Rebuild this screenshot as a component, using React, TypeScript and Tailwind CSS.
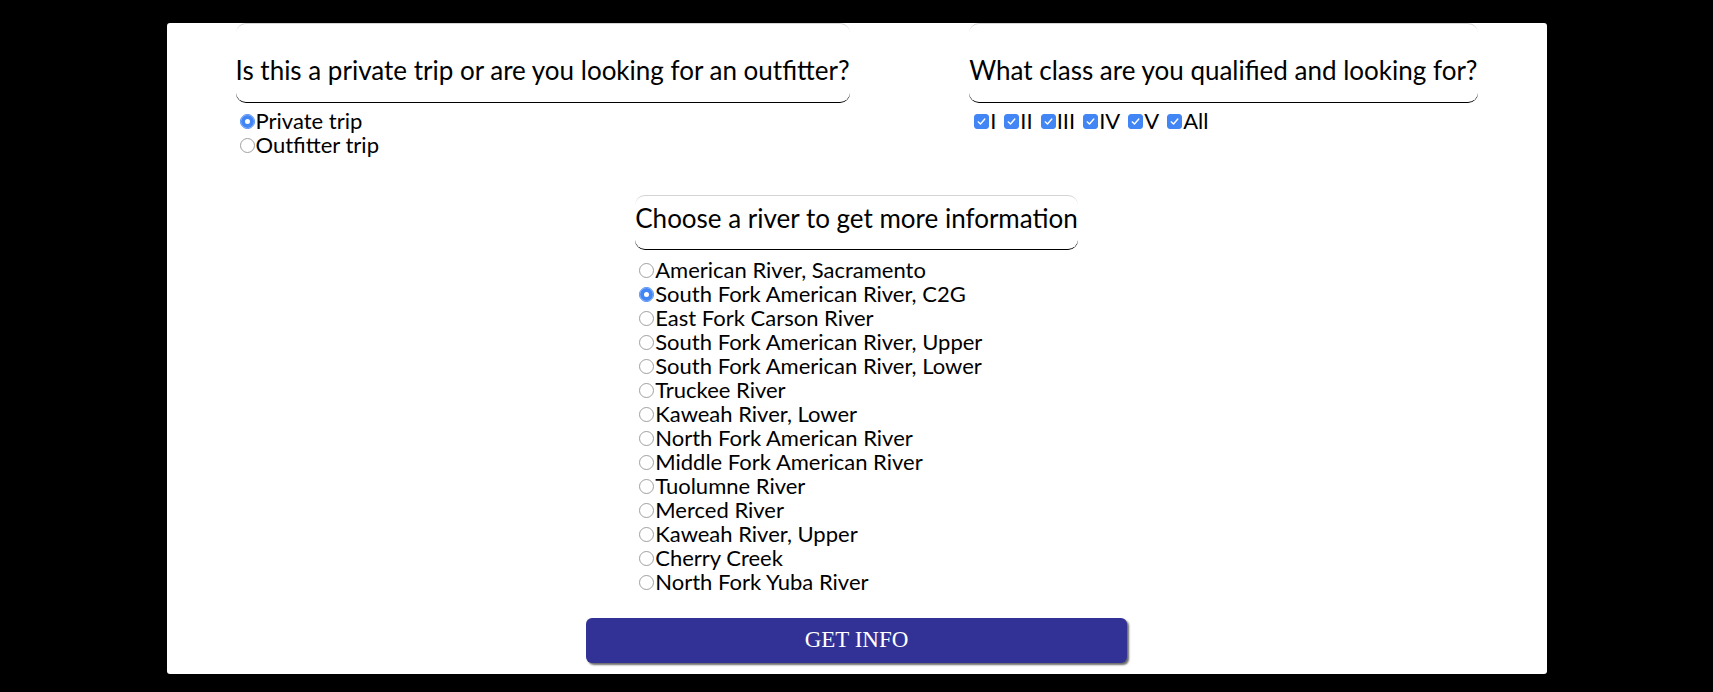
import { useState } from "react";

const rivers = [
  "American River, Sacramento",
  "South Fork American River, C2G",
  "East Fork Carson River",
  "South Fork American River, Upper",
  "South Fork American River, Lower",
  "Truckee River",
  "Kaweah River, Lower",
  "North Fork American River",
  "Middle Fork American River",
  "Tuolumne River",
  "Merced River",
  "Kaweah River, Upper",
  "Cherry Creek",
  "North Fork Yuba River",
];

const classes = ["I", "II", "III", "IV", "V", "All"];

const font = { fontFamily: "Lato, 'Open Sans', sans-serif" };

const radioCls =
  "ml-[4px] mr-[1px] h-[15px] w-[15px] shrink-0 appearance-none rounded-full border border-[#a0a0a0] bg-white checked:border-[#4285f4] checked:shadow-[inset_0_0_0_4px_#4285f4]";

function Heading({ children, className }: { children: string; className: string }) {
  return (
    <div
      className={[
        "inline-block rounded-[10px] border-t border-b border-t-[#d4d4d4] border-b-black text-[26px] leading-[30px] text-black whitespace-nowrap",
        className,
      ].join(" ")}
    >
      {children}
    </div>
  );
}

export default function App() {
  const [trip, setTrip] = useState("private");
  const [river, setRiver] = useState(rivers[1]);
  const [checked, setChecked] = useState<string[]>(classes);

  function toggle(c: string) {
    setChecked((prev) =>
      prev.includes(c) ? prev.filter((x) => x !== c) : [...prev, c]
    );
  }

  return (
    <div className="min-h-screen bg-black pt-[23px]" style={font}>
      <div className="mx-auto flex w-[1380px] flex-col rounded-[3px] bg-white pb-[11px] text-black">
        {/* top row */}
        <div className="flex justify-between px-[69px]">
          <div className="flex flex-col items-start">
            <Heading className="pt-[31px] pb-[17px]">
              Is this a private trip or are you looking for an outfitter?
            </Heading>
            <div className="mt-[6px] flex flex-col text-[22px] leading-[24px]">
              <label className="flex items-center">
                <input
                  type="radio"
                  name="trip"
                  checked={trip === "private"}
                  onChange={() => setTrip("private")}
                  className={radioCls}
                />
                Private trip
              </label>
              <label className="flex items-center">
                <input
                  type="radio"
                  name="trip"
                  checked={trip === "outfitter"}
                  onChange={() => setTrip("outfitter")}
                  className={radioCls}
                />
                Outfitter trip
              </label>
            </div>
          </div>

          <div className="flex flex-col items-start">
            <Heading className="pt-[31px] pb-[17px]">
              What class are you qualified and looking for?
            </Heading>
            <div className="mt-[6px] flex gap-[3px] text-[22px] leading-[24px]">
              {classes.map((c) => (
                <label key={c} className="flex items-center">
                  <input
                    type="checkbox"
                    checked={checked.includes(c)}
                    onChange={() => toggle(c)}
                    className="peer sr-only"
                  />
                  <span className="ml-[5px] mr-[1px] flex h-[15px] w-[15px] items-center justify-center rounded-[3px] border border-[#a0a0a0] bg-white peer-checked:border-[#4285f4] peer-checked:bg-[#4285f4]">
                    {checked.includes(c) && (
                      <svg viewBox="0 0 12 12" className="h-[11px] w-[11px]">
                        <path
                          d="M2.4 6.4 L4.9 8.8 L9.6 3.3"
                          fill="none"
                          stroke="white"
                          strokeWidth="1.5"
                          strokeLinecap="round"
                          strokeLinejoin="round"
                        />
                      </svg>
                    )}
                  </span>
                  {c}
                </label>
              ))}
            </div>
          </div>
        </div>

        {/* river picker */}
        <div className="mt-[38px] flex flex-col items-center">
          <div className="flex flex-col items-start">
            <Heading className="pt-[7px] pb-[16px]">
              Choose a river to get more information
            </Heading>
            <div className="mt-[8px] flex flex-col text-[22px] leading-[24px]">
              {rivers.map((r) => (
                <label key={r} className="flex items-center">
                  <input
                    type="radio"
                    name="river"
                    checked={river === r}
                    onChange={() => setRiver(r)}
                    className={radioCls}
                  />
                  {r}
                </label>
              ))}
            </div>
          </div>
          <button
            className="mt-[24px] h-[45px] w-[541px] rounded-[6px] bg-[#323296] text-[23px] uppercase text-white shadow-[2px_2px_2px_#6b6b6b]"
            style={{ fontFamily: "'Liberation Serif', serif" }}
          >
            Get Info
          </button>
        </div>
      </div>
    </div>
  );
}
